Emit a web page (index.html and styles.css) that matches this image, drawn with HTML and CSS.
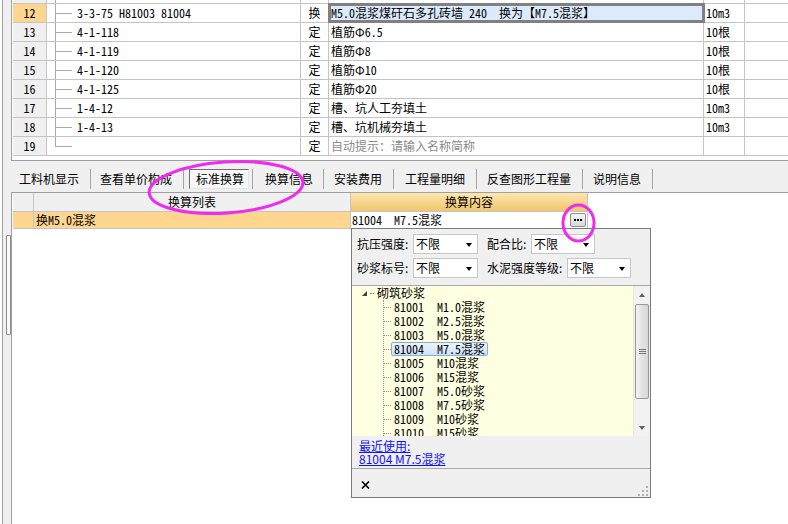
FILE: index.html
```html
<!DOCTYPE html>
<html lang="zh-CN">
<head>
<meta charset="utf-8">
<title>标准换算</title>
<link rel="stylesheet" href="styles.css">
</head>
<body>
<div class="app">
  <div class="side"><div class="grip"></div></div>
  <div class="main">
    <div class="upper">
      <div class="grid">
        <div class="row"><div class="c num"></div><div class="c code"></div><div class="c typ"></div><div class="c name"></div><div class="c unit"></div><div class="c ext"></div></div>
        <div class="row"><div class="c num cur">12</div><div class="c code">3-3-75 H81003 81004</div><div class="c typ">换</div><div class="c name picked">M5.0混浆煤矸石多孔砖墙 240  换为【M7.5混浆】</div><div class="c unit">10m3</div><div class="c ext"></div></div>
        <div class="row"><div class="c num">13</div><div class="c code">4-1-118</div><div class="c typ">定</div><div class="c name">植筋Φ6.5</div><div class="c unit">10根</div><div class="c ext"></div></div>
        <div class="row"><div class="c num">14</div><div class="c code">4-1-119</div><div class="c typ">定</div><div class="c name">植筋Φ8</div><div class="c unit">10根</div><div class="c ext"></div></div>
        <div class="row"><div class="c num">15</div><div class="c code">4-1-120</div><div class="c typ">定</div><div class="c name">植筋Φ10</div><div class="c unit">10根</div><div class="c ext"></div></div>
        <div class="row"><div class="c num">16</div><div class="c code">4-1-125</div><div class="c typ">定</div><div class="c name">植筋Φ20</div><div class="c unit">10根</div><div class="c ext"></div></div>
        <div class="row"><div class="c num">17</div><div class="c code">1-4-12</div><div class="c typ">定</div><div class="c name">槽、坑人工夯填土</div><div class="c unit">10m3</div><div class="c ext"></div></div>
        <div class="row"><div class="c num">18</div><div class="c code">1-4-13</div><div class="c typ">定</div><div class="c name">槽、坑机械夯填土</div><div class="c unit">10m3</div><div class="c ext"></div></div>
        <div class="row"><div class="c num">19</div><div class="c code last"></div><div class="c typ">定</div><div class="c name hint">自动提示：请输入名称简称</div><div class="c unit"></div><div class="c ext"></div></div>
      </div>
    </div>

    <div class="tabbar">
      <div class="tab t1">工料机显示</div><div class="sep"></div>
      <div class="tab t2">查看单价构成</div><div class="sep"></div>
      <div class="tab t3"><div class="tabbox">标准换算</div></div><div class="sep"></div>
      <div class="tab t4">换算信息</div><div class="sep"></div>
      <div class="tab t5">安装费用</div><div class="sep"></div>
      <div class="tab t6">工程量明细</div><div class="sep"></div>
      <div class="tab t7">反查图形工程量</div><div class="sep"></div>
      <div class="tab t8">说明信息</div><div class="sep"></div>
    </div>

    <div class="lower">
      <div class="lhead">
        <div class="lc ind hd"></div>
        <div class="lc list hd">换算列表</div>
        <div class="lc cont hd2">换算内容</div>
      </div>
      <div class="lrow">
        <div class="lc ind cur"></div>
        <div class="lc list cur">换M5.0混浆</div>
        <div class="lc cont val"><span>81004  M7.5混浆</span><span class="more"><i></i><i></i><i></i></span></div>
      </div>
    </div>
  </div>
</div>

<div class="popup">
  <div class="filters">
    <div class="frow">
      <span class="flabel w56">抗压强度:</span><span class="dd">不限<b class="arr"></b></span>
      <span class="flabel w44 gap">配合比:</span><span class="dd s64">不限<b class="arr"></b></span>
    </div>
    <div class="frow">
      <span class="flabel w56">砂浆标号:</span><span class="dd">不限<b class="arr"></b></span>
      <span class="flabel w80 gap">水泥强度等级:</span><span class="dd s64">不限<b class="arr"></b></span>
    </div>
  </div>
  <div class="tree">
    <div class="tbody">
      <div class="root"><span class="tri"></span><span class="rdots"></span><span>砌筑砂浆</span></div>
      <div class="kids">
        <div class="kid"><span class="conn"></span><span class="item"><span class="kc">81001</span>M1.0混浆</span></div>
        <div class="kid"><span class="conn"></span><span class="item"><span class="kc">81002</span>M2.5混浆</span></div>
        <div class="kid"><span class="conn"></span><span class="item"><span class="kc">81003</span>M5.0混浆</span></div>
        <div class="kid"><span class="conn"></span><span class="item on"><span class="kc">81004</span>M7.5混浆</span></div>
        <div class="kid"><span class="conn"></span><span class="item"><span class="kc">81005</span>M10混浆</span></div>
        <div class="kid"><span class="conn"></span><span class="item"><span class="kc">81006</span>M15混浆</span></div>
        <div class="kid"><span class="conn"></span><span class="item"><span class="kc">81007</span>M5.0砂浆</span></div>
        <div class="kid"><span class="conn"></span><span class="item"><span class="kc">81008</span>M7.5砂浆</span></div>
        <div class="kid"><span class="conn"></span><span class="item"><span class="kc">81009</span>M10砂浆</span></div>
        <div class="kid"><span class="conn"></span><span class="item"><span class="kc">81010</span>M15砂浆</span></div>
        <div class="kid"><span class="conn"></span><span class="item"><span class="kc">81011</span>M20砂浆</span></div>
      </div>
    </div>
    <div class="sb">
      <div class="sb-btn"><b class="up"></b></div>
      <div class="thumb"><i></i><i></i><i></i></div>
      <div class="sb-fill"></div>
      <div class="sb-btn"><b class="dn"></b></div>
    </div>
  </div>
  <div class="recent">
    <a class="lnk">最近使用:</a>
    <a class="lnk">81004 M7.5混浆</a>
  </div>
  <div class="pbot">
    <svg class="close" width="9" height="8" viewBox="0 0 9 8"><path d="M1 0.5 L8 7.5 M8 0.5 L1 7.5" stroke="#000" stroke-width="1.6" fill="none"/></svg>
    <svg class="rgrip" width="12" height="11" viewBox="0 0 12 11">
      <rect x="9" y="1" width="2" height="2" fill="#b0b0b0"/>
      <rect x="5" y="5" width="2" height="2" fill="#b0b0b0"/>
      <rect x="9" y="5" width="2" height="2" fill="#b0b0b0"/>
      <rect x="1" y="9" width="2" height="2" fill="#b0b0b0"/>
      <rect x="5" y="9" width="2" height="2" fill="#b0b0b0"/>
      <rect x="9" y="9" width="2" height="2" fill="#b0b0b0"/>
    </svg>
  </div>
</div>

<svg class="marks" width="788" height="524" viewBox="0 0 788 524">
  <ellipse cx="226" cy="187.5" rx="77" ry="25.5" transform="rotate(-4 226 187.5)" fill="none" stroke="#ee2bee" stroke-width="3"/>
  <ellipse cx="578.5" cy="223" rx="15.5" ry="18" fill="none" stroke="#ee2bee" stroke-width="3"/>
</svg>
</body>
</html>
```

FILE: styles.css
```css
* { box-sizing: border-box; margin: 0; padding: 0; }
html, body { width: 788px; height: 524px; overflow: hidden; background: #fff; }
body {
  position: relative;
  font-family: "Noto Sans CJK SC", sans-serif;
  font-size: 12px;
  color: #000;
}

.app { display: flex; height: 524px; }

.side {
  flex: 0 0 9px;
  margin-left: 2px;
  border-left: 1px solid #a0a0a0;
  background: #f0f0f0;
  padding-top: 235px;
  padding-left: 3px;
}
.grip {
  width: 5px;
  height: 100px;
  border: 1px solid #8c8c8c;
  border-radius: 1px;
  background: #fbfbfb;
}

.main { flex: 1; min-width: 0; display: flex; flex-direction: column; }

/* upper grid */
.upper {
  height: 161px;
  border-left: 1px solid #a0a0a0;
  border-bottom: 1px solid #a0a0a0;
  padding-left: 1px;
  overflow: hidden;
  background: #fff;
}
.grid { margin-top: -15px; }
.row {
  display: flex;
  height: 19px;
  border-bottom: 1px solid #c4c4c4;
  line-height: 18px;
  font-family: "Noto Sans Mono CJK SC", "Noto Sans CJK SC", monospace;
  font-size: 12px;
}
.c {
  flex: none;
  height: 18px;
  border-right: 1px solid #c4c4c4;
  white-space: pre;
  overflow: hidden;
}
.num { width: 34px; text-align: center; background: #f0f0f0; }
.num.cur { background: #ffd68f; }
.code {
  width: 254px;
  padding-left: 30px;
  background-image: linear-gradient(#a8a8a8, #a8a8a8), linear-gradient(#a8a8a8, #a8a8a8);
  background-repeat: no-repeat;
  background-position: 8px 0, 8px 9px;
  background-size: 1px 18px, 17px 1px;
}
.code.last { background-size: 1px 10px, 17px 1px; }
.row:first-child .code { background-size: 1px 18px, 0 0; }
.typ { width: 28px; text-align: center; }
.name { width: 375px; padding-left: 2px; }
.name.picked {
  background: #dcebfb;
  outline: 3px solid #808080;
  outline-offset: -2px;
}
.name.hint { color: #8a8a8a; }
.unit { width: 41px; padding-left: 2px; }
.ext { width: 100px; border-right: 0; }

/* tab bar */
.tabbar {
  height: 31px;
  background: #f0f0f0;
  display: flex;
  align-items: flex-start;
  padding-top: 8px;
}
.tab {
  flex: none;
  height: 20px;
  line-height: 20px;
  white-space: nowrap;
  font-size: 12px;
}
.sep { flex: none; width: 1px; height: 20px; background: #a4a4a4; }
.t1 { width: 79px; padding-left: 8px; }
.t2 { width: 92px; padding-left: 9px; }
.t3 { width: 68px; padding-left: 5px; }
.t4 { width: 70px; padding-left: 12px; }
.t5 { width: 69px; padding-left: 10px; }
.t6 { width: 82px; padding-left: 11px; }
.t7 { width: 105px; padding-left: 10px; }
.t8 { width: 69px; padding-left: 10px; }
.tabbox {
  width: 60px;
  height: 20px;
  line-height: 18px;
  padding-left: 6px;
  border: 1px solid;
  border-color: #6e6e6e #e4e4e4 #e4e4e4 #6e6e6e;
  background: #f8f8f8;
}

/* lower grid */
.lower {
  flex: 1;
  border-left: 1px solid #a0a0a0;
  border-top: 1px solid #a0a0a0;
  padding-left: 1px;
  background: #fff;
  font-family: "Noto Sans Mono CJK SC", "Noto Sans CJK SC", monospace;
}
.lhead, .lrow { display: flex; }
.lhead { height: 19px; line-height: 18px; }
.lrow { height: 17px; line-height: 16px; }
.lc { flex: none; border-right: 1px solid #c4c4c4; border-bottom: 1px solid #c4c4c4; white-space: pre; }
.ind { width: 21px; }
.list { width: 317px; }
.cont { width: 237px; }
.hd { background: #f0f0f0; }
.list.hd { text-align: center; }
.hd2 {
  text-align: center;
  background: linear-gradient(#fde6b0, #f2c66c);
}
.cur { background: #ffd68f; }
.list.cur { padding-left: 2px; }
.val {
  padding-left: 1px;
  display: flex;
  justify-content: space-between;
  align-items: flex-start;
  background: #fff;
}
.more {
  width: 16px;
  height: 14px;
  margin-top: 1px;
  margin-right: 1px;
  border: 1px solid #8e8e8e;
  border-radius: 2px;
  background: linear-gradient(#f6f6f6, #d8d8d8);
  display: flex;
  justify-content: center;
  align-items: center;
  gap: 1px;
}
.more i { width: 2px; height: 2px; background: #000; }

/* popup */
.popup {
  position: absolute;
  left: 351px;
  top: 228px;
  width: 300px;
  height: 270px;
  border: 1px solid #7a7a7a;
  background: #f0f0f0;
  display: flex;
  flex-direction: column;
}
.filters {
  padding: 5px 0 7px 5px;
  display: flex;
  flex-direction: column;
  gap: 4px;
}
.frow { display: flex; height: 20px; align-items: center; }
.flabel { flex: none; white-space: nowrap; line-height: 20px; }
.w56 { width: 56px; }
.w44 { width: 44px; }
.w80 { width: 80px; }
.gap { margin-left: 9px; }
.dd {
  flex: none;
  width: 65px;
  height: 20px;
  line-height: 18px;
  padding: 0 5px 0 2px;
  border: 1px solid #c6c6c6;
  background: #fff;
  display: flex;
  justify-content: space-between;
  align-items: center;
}
.dd.s64 { width: 64px; }
.arr {
  width: 0; height: 0;
  border-left: 3.5px solid transparent;
  border-right: 3.5px solid transparent;
  border-top: 4px solid #000;
  margin-top: 1px;
}

.tree {
  height: 151px;
  border-top: 1px solid #a8a8a8;
  display: flex;
  background: #ffffe1;
}
.tbody {
  flex: 1;
  overflow: hidden;
  font-family: "Noto Sans Mono CJK SC", "Noto Sans CJK SC", monospace;
  line-height: 14px;
}
.root { height: 14px; display: flex; align-items: center; padding-left: 10px; }
.tri {
  width: 0; height: 0;
  border-left: 5px solid transparent;
  border-bottom: 5px solid #404040;
  margin-top: 1px;
}
.rdots {
  width: 4px;
  margin: 1px 3px 0 3px;
  border-top: 1px dotted #808080;
}
.kids {
  margin-left: 31px;
  border-left: 1px dotted #8a8a8a;
}
.kid { height: 14px; display: flex; align-items: center; }
.conn { width: 7px; border-top: 1px dotted #8a8a8a; }
.item {
  height: 14px;
  line-height: 12px;
  padding: 0 2px;
  border: 1px solid transparent;
  border-radius: 2px;
  white-space: nowrap;
}
.item.on {
  border-color: #84acdd;
  background: linear-gradient(#eef5fe, #cfe2fa);
}
.kc { display: inline-block; width: 43px; }

.sb {
  flex: 0 0 17px;
  background: #f2f2f2;
  border-left: 1px solid #e8e8e8;
  display: flex;
  flex-direction: column;
  align-items: center;
}
.sb-btn { height: 17px; width: 100%; display: flex; justify-content: center; align-items: center; }
.up, .dn { width: 0; height: 0; border-left: 3.5px solid transparent; border-right: 3.5px solid transparent; }
.up { border-bottom: 4px solid #606060; }
.dn { border-top: 4px solid #606060; }
.thumb {
  margin-top: 1px;
  width: 14px;
  height: 95px;
  border: 1px solid #979797;
  border-radius: 2px;
  background: linear-gradient(90deg, #f4f4f4, #e2e2e2 50%, #d6d6d6);
  display: flex;
  flex-direction: column;
  justify-content: center;
  align-items: center;
  gap: 1px;
}
.thumb i { width: 7px; height: 1px; background: #7a7a7a; }
.sb-fill { flex: 1; }

.recent {
  height: 32px;
  padding: 3px 0 0 7px;
  display: flex;
  flex-direction: column;
  align-items: flex-start;
}
.lnk {
  height: 13px;
  line-height: 13px;
  color: #1010ff;
  text-decoration: underline;
  white-space: nowrap;
}

.pbot {
  flex: 1;
  border-top: 1px solid #a8a8a8;
  display: flex;
  justify-content: space-between;
  align-items: flex-start;
  padding: 12px 1px 0 9px;
}
.rgrip { margin-top: 4px; }

.marks { position: absolute; left: 0; top: 0; pointer-events: none; }
```
